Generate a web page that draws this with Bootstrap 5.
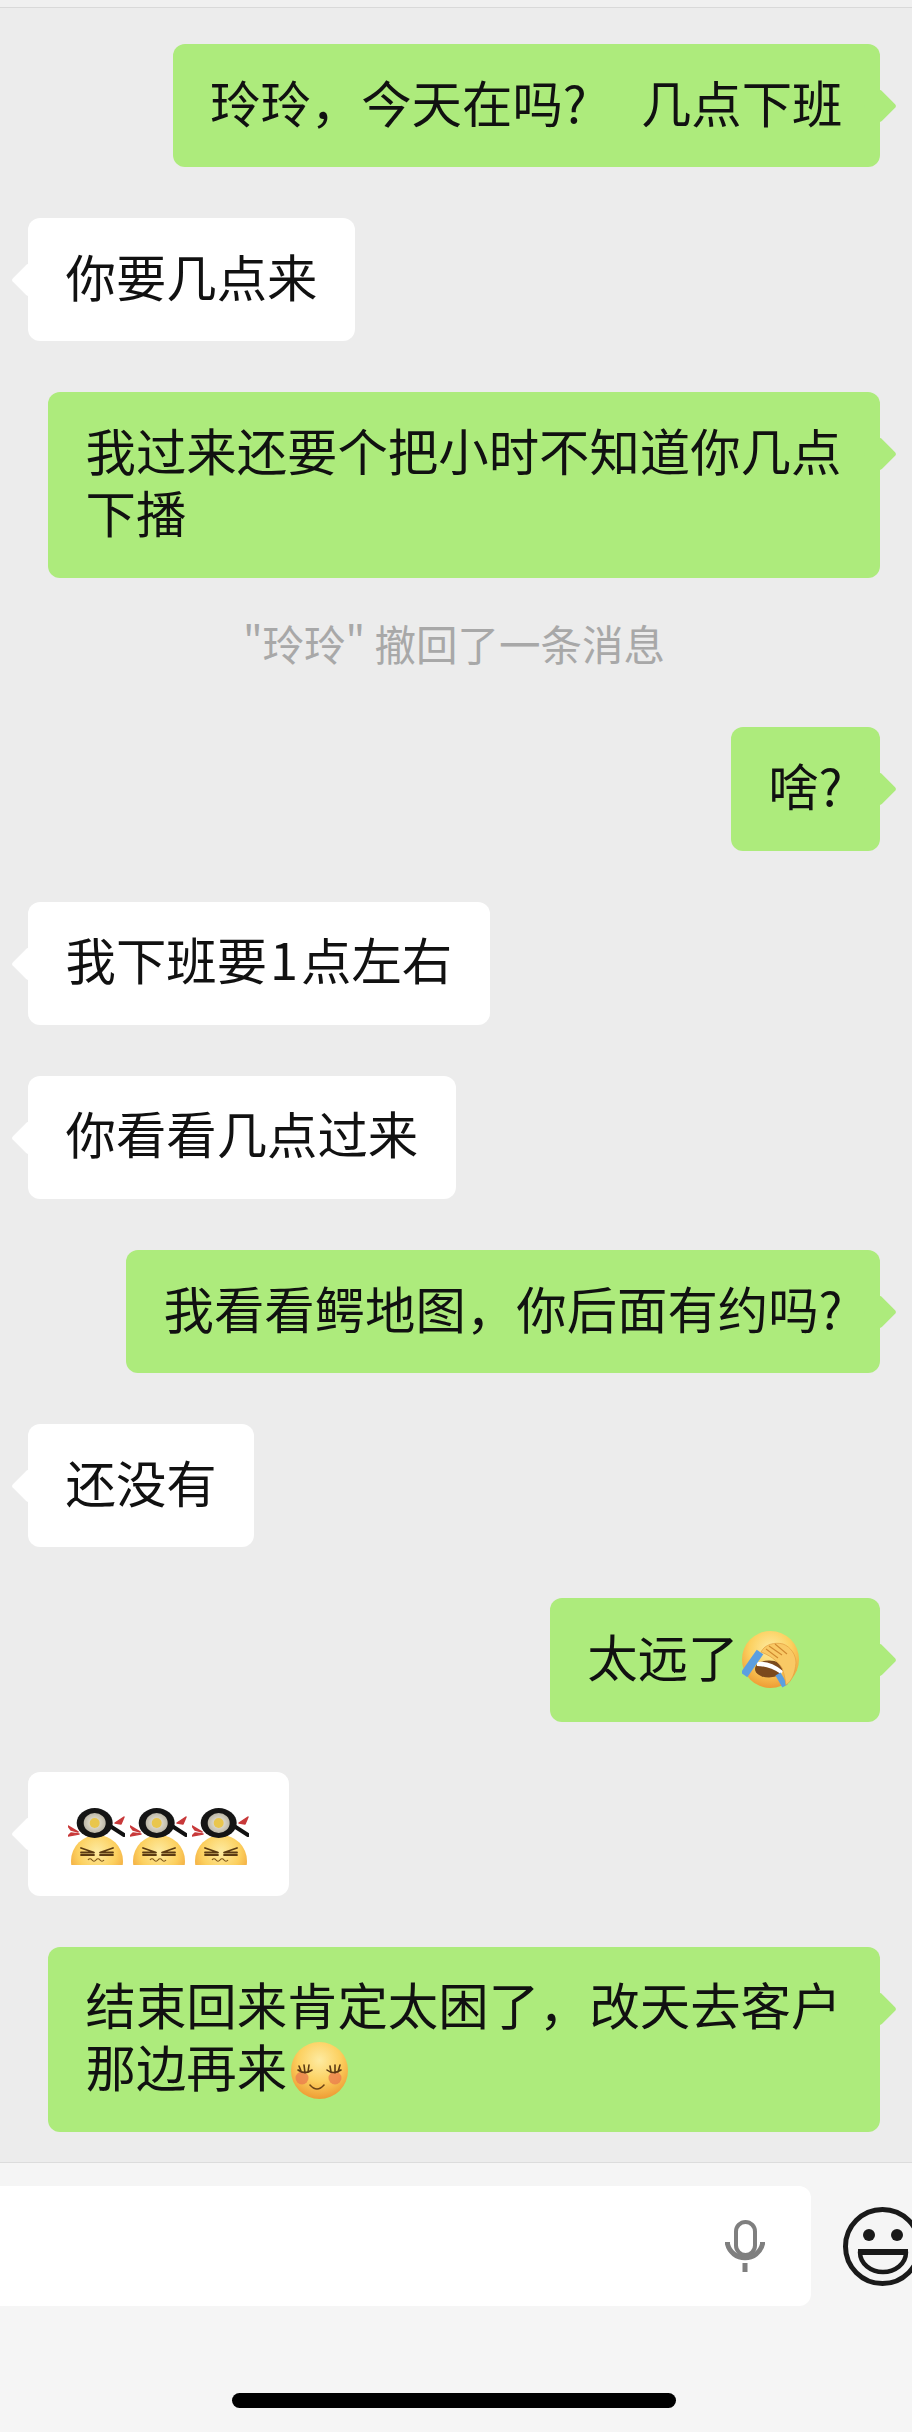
<!DOCTYPE html>
<html lang="zh-CN">
<head>
    <meta charset="UTF-8">
    <title>聊天</title>
    <meta name="viewport" content="width=device-width, initial-scale=1">
    <link href="https://cdn.jsdelivr.net/npm/bootstrap@5.3.3/dist/css/bootstrap.min.css" rel="stylesheet">
    <style>
        html, body {
            height: 100%;
            overflow: hidden;
        }
        body {
            background: #ececec;
            color: #111;
            font-family: "Noto Sans CJK SC", "Liberation Sans", sans-serif;
        }
        .top-strip {
            height: 8px;
            background: #f0f0f0;
            border-bottom: 1px solid #d9d9d9;
        }
        .chat-list {
            gap: 50.9px;
            padding: 36px 32px 0 28px;
        }
        .bubble-msg {
            position: relative;
            max-width: 832px;
            padding: 26.65px 37.5px 34.65px;
            border-radius: 12px;
            font-size: 50.4px;
            line-height: 62px;
            white-space: pre-wrap;
            word-spacing: 6.8px;
        }
        .bubble-msg::after {
            content: "";
            position: absolute;
            top: 50px;
            width: 24px;
            height: 24px;
            border-radius: 3px;
            transform: rotate(45deg);
            background: inherit;
        }
        .bubble-me {
            background: #adeb7c;
        }
        .bubble-me::after {
            right: -12px;
        }
        .bubble-other {
            background: #fff;
        }
        .bubble-other::after {
            left: -12px;
        }
        .digit-gap {
            margin: 0 3px;
        }
        .sys-note {
            margin-top: -3px;
            padding-bottom: 17px;
            font-size: 41.5px;
            line-height: 34px;
            color: #a8a8a8;
        }
        .emo {
            display: inline-block;
            width: 57px;
            height: 57px;
            margin: 6.5px 2.5px -1.5px;
            vertical-align: top;
        }
        .emo-after-text {
            margin-left: 3.5px;
        }
        .emo-tail {
            margin-right: 43.5px;
        }
        .emo-pan {
            margin-top: 9px;
            margin-bottom: -4px;
        }
        .composer {
            height: 270px;
            background: #f5f5f5;
            border-top: 1px solid #dcdcdc;
            padding-top: 23px;
        }
        .input-box {
            width: 811px;
            height: 120px;
            background: #fff;
            border-radius: 0 12px 12px 0;
            padding-right: 46px;
        }
        .smile-btn {
            width: 79px;
            height: 79px;
            flex: none;
            margin-left: 32px;
        }
        .home-bar {
            width: 444px;
            height: 15px;
            margin-top: 87px;
            background: #000;
        }
    </style>
</head>
<body class="d-flex flex-column vh-100">
    <svg width="0" height="0" class="position-absolute">
        <defs>
            <radialGradient id="faceFill" cx="50%" cy="32%" r="68%">
                <stop offset="0" stop-color="#fdeba2"/>
                <stop offset="0.55" stop-color="#fcd05f"/>
                <stop offset="1" stop-color="#ee9c34"/>
            </radialGradient>
            <radialGradient id="eggFill" cx="50%" cy="50%" r="50%">
                <stop offset="0" stop-color="#f4efe0"/>
                <stop offset="1" stop-color="#bdb8a8"/>
            </radialGradient>
            <symbol id="panFace" viewBox="0 0 57 57">
                <circle cx="29" cy="53" r="26" fill="url(#faceFill)"/>
                <path d="M13 40 26 44.500 13 44.500M13 47H26" fill="none" stroke="#5a3a12" stroke-width="1.800" stroke-linecap="round" stroke-linejoin="round"/>
                <path d="M45 40 32 44.500H45M32 47H45" fill="none" stroke="#5a3a12" stroke-width="1.800" stroke-linecap="round" stroke-linejoin="round"/>
                <path d="M20 52q2-2.500 4 0t4 0 4 0 4 0" fill="none" stroke="#7a5216" stroke-width="1.200"/>
                <path d="M42 18 56 27" stroke="#111" stroke-width="4" stroke-linecap="round"/>
                <ellipse cx="26.700" cy="15" rx="18" ry="15" fill="#151515"/>
                <ellipse cx="26.700" cy="15" rx="11" ry="10" fill="url(#eggFill)"/>
                <circle cx="26.700" cy="15" r="5" fill="#e9c64d"/>
                <path d="M0 18 10 24 3 22ZM0 28 11 26 3 25Z" fill="#c8393a" stroke="#c8393a" stroke-width="1.500" stroke-linejoin="round"/>
                <path d="M47 15 56 9 53 16Z" fill="#c8393a" stroke="#c8393a" stroke-width="1.500" stroke-linejoin="round"/>
            </symbol>
        </defs>
    </svg>

    <div class="top-strip flex-shrink-0"></div>

    <main class="chat-list d-flex flex-column flex-grow-1 overflow-hidden">
        <div class="d-flex justify-content-end"><div class="bubble-msg bubble-me">玲玲，今天在吗?   几点下班</div></div>
        <div class="d-flex"><div class="bubble-msg bubble-other">你要几点来</div></div>
        <div class="d-flex justify-content-end"><div class="bubble-msg bubble-me">我过来还要个把小时不知道你几点下播</div></div>
        <div class="d-flex justify-content-center sys-note">"玲玲" 撤回了一条消息</div>
        <div class="d-flex justify-content-end"><div class="bubble-msg bubble-me">啥?</div></div>
        <div class="d-flex"><div class="bubble-msg bubble-other">我下班要<span class="digit-gap">1</span>点左右</div></div>
        <div class="d-flex"><div class="bubble-msg bubble-other">你看看几点过来</div></div>
        <div class="d-flex justify-content-end"><div class="bubble-msg bubble-me">我看看鳄地图，你后面有约吗?</div></div>
        <div class="d-flex"><div class="bubble-msg bubble-other">还没有</div></div>
        <div class="d-flex justify-content-end">
            <div class="bubble-msg bubble-me">太远了<svg class="emo emo-after-text emo-tail" viewBox="0 0 57 57" role="img" aria-label="捂脸">
                <circle cx="28.500" cy="28.500" r="28.500" fill="url(#faceFill)"/>
                <ellipse cx="27" cy="38" rx="14" ry="8.500" fill="#7b4a1c"/>
                <path d="M15 31Q28 29 41 40L39 43Q27 35 15 35Z" fill="#fff"/>
                <path d="M2 44 18 21" stroke="#5b9fe0" stroke-width="8"/>
                <path d="M36 43 43 55" stroke="#5b9fe0" stroke-width="6"/>
                <path d="M19 21C23 13 33 11 41 13 49 16 54 24 54 32 53 42 50 50 44 54 43 47 42 42 40 37 35 29 27 24 19 21Z" fill="#f9c965" stroke="#e6a545" stroke-width="0.800"/>
                <path d="M27 15 40 24M33 13 45 23M24 18 36 27" fill="none" stroke="#d08a30" stroke-width="1.100"/>
            </svg></div>
        </div>
        <div class="d-flex">
            <div class="bubble-msg bubble-other"><svg class="emo emo-pan" role="img" aria-label="平底锅"><use href="#panFace"/></svg><svg class="emo emo-pan" role="img" aria-label="平底锅"><use href="#panFace"/></svg><svg class="emo emo-pan" role="img" aria-label="平底锅"><use href="#panFace"/></svg></div>
        </div>
        <div class="d-flex justify-content-end">
            <div class="bubble-msg bubble-me">结束回来肯定太困了，改天去客户那边再来<svg class="emo emo-after-text" viewBox="0 0 57 57" role="img" aria-label="害羞">
                <circle cx="28.500" cy="28.500" r="28.500" fill="url(#faceFill)"/>
                <circle cx="11" cy="36" r="6.500" fill="#ea7b4e" opacity="0.750"/>
                <circle cx="44" cy="36" r="6.500" fill="#ea7b4e" opacity="0.750"/>
                <path d="M7 28Q14 33 21 28M8 24 10 29M13 23 14 31M18 23 17 30M36 28Q42 33 50 28M39 24 40 30M44 23 44 31M49 23 47 30" fill="none" stroke="#5b3a14" stroke-width="1.600" stroke-linecap="round"/>
                <path d="M19 43Q26 51 33 43" fill="none" stroke="#6b4416" stroke-width="1.600" stroke-linecap="round"/>
            </svg></div>
        </div>
    </main>

    <footer class="composer flex-shrink-0">
        <div class="d-flex align-items-center">
            <div class="input-box d-flex align-items-center justify-content-end flex-shrink-0">
                <svg width="40" height="52" viewBox="0 0 40 52" role="img" aria-label="语音">
                    <rect x="11" y="2" width="19" height="33" rx="9.500" fill="none" stroke="#7f7f7f" stroke-width="4"/>
                    <path d="M2.500 22v2a18 18 0 0 0 35 0v-2M20 43v9" fill="none" stroke="#7f7f7f" stroke-width="5"/>
                </svg>
            </div>
            <svg class="smile-btn" viewBox="0 0 79 79" role="img" aria-label="表情">
                <circle cx="39.500" cy="39.500" r="37" fill="none" stroke="#1a1a1a" stroke-width="5"/>
                <circle cx="26" cy="28" r="6" fill="#1a1a1a"/>
                <circle cx="54" cy="28" r="6" fill="#1a1a1a"/>
                <path d="M17 45H63C63 57 52 65 40 65S17 57 17 45Z" fill="none" stroke="#1a1a1a" stroke-width="4.500" stroke-linejoin="round"/>
                <path d="M15 45H65" stroke="#1a1a1a" stroke-width="6"/>
            </svg>
        </div>
        <div class="d-flex justify-content-center pe-1">
            <div class="home-bar rounded-pill"></div>
        </div>
    </footer>

    <script src="https://cdn.jsdelivr.net/npm/bootstrap@5.3.3/dist/js/bootstrap.bundle.min.js"></script>
</body>
</html>
